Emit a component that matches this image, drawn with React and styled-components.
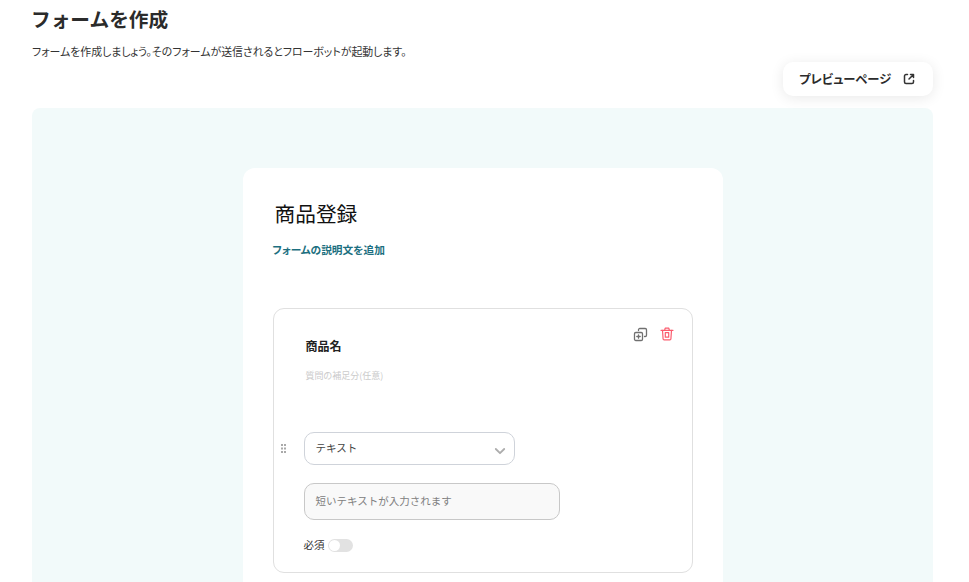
import React from "react";
import styled, { createGlobalStyle } from "styled-components";

const GlobalStyle = createGlobalStyle`
  html, body {
    margin: 0;
    padding: 0;
    height: 582px;
    overflow: hidden;
    background: #fff;
    font-family: "Noto Sans CJK JP", "Noto Sans", sans-serif;
    color: #222;
  }
  * { box-sizing: border-box; }
`;

const Page = styled.div`
  padding: 5px 36px 0 32px;
`;

const Title = styled.h1`
  margin: 0 0 0 -1px;
  font-size: 19.7px;
  line-height: 28px;
  font-weight: 700;
  color: #2b2b2b;
`;

const Lead = styled.p`
  margin: 10px 0 0;
  font-size: 10.9px;
  line-height: 16px;
  font-feature-settings: "palt";
  color: #333;
`;

const Actions = styled.div`
  display: flex;
  justify-content: flex-end;
  margin-top: 3px;
`;

const PreviewButton = styled.button`
  display: flex;
  align-items: center;
  gap: 12px;
  width: 150px;
  height: 34px;
  padding: 0 17px 1px 16px;
  border: 0;
  border-radius: 10px;
  background: #fff;
  box-shadow: 0 2px 14px rgba(0, 0, 0, 0.09);
  font-family: inherit;
  font-size: 12.3px;
  font-weight: 700;
  font-feature-settings: "palt";
  color: #2b2b2b;
  white-space: nowrap;
`;

const Canvas = styled.section`
  display: flex;
  justify-content: center;
  height: 480px;
  margin-top: 12px;
  padding-top: 60px;
  background: #f2fafa;
  border-radius: 8px 8px 0 0;
`;

const FormCard = styled.div`
  width: 480px;
  height: 420px;
  padding: 30px 30px 0;
  background: #fff;
  border-radius: 12px 12px 0 0;
`;

const FormTitle = styled.h2`
  margin: 0 0 0 2px;
  font-size: 20.7px;
  line-height: 30px;
  font-weight: 400;
  color: #111;
`;

const AddDescription = styled.a`
  display: block;
  margin-top: 14px;
  font-size: 10.7px;
  line-height: 16px;
  font-weight: 700;
  font-feature-settings: "palt";
  color: #1c6f80;
`;

const QuestionCard = styled.div`
  position: relative;
  width: 420px;
  height: 265px;
  margin-top: 50px;
  padding: 28px 31px 0;
  border: 1px solid #e0e0e0;
  border-radius: 11px;
`;

const Tools = styled.div`
  position: absolute;
  top: 18px;
  right: 18px;
  display: flex;
  gap: 12px;
`;

const QuestionName = styled.div`
  margin-left: 1px;
  font-size: 12px;
  line-height: 18px;
  font-weight: 700;
  color: #222;
`;

const QuestionHint = styled.div`
  margin: 14px 0 0 1px;
  font-size: 9px;
  line-height: 14px;
  font-feature-settings: "palt";
  color: #cbcbcb;
`;

const Handle = styled.svg`
  position: absolute;
  left: 7px;
  top: 135px;
`;

const TypeSelect = styled.div`
  display: flex;
  align-items: center;
  justify-content: space-between;
  width: 211px;
  height: 33px;
  margin: 49px 0 0 -1px;
  padding: 0 8px 2px 11px;
  border: 1px solid #cfd3da;
  border-radius: 10px;
  font-size: 10.5px;
  color: #444;
`;

const TextPreview = styled.div`
  display: flex;
  align-items: center;
  width: 256px;
  height: 37px;
  margin: 18px 0 0 -1px;
  padding: 0 0 2px 11px;
  border: 1px solid #c8c8c8;
  border-radius: 10px;
  background: #f9f9f9;
  font-size: 10.5px;
  color: #808080;
`;

const RequiredRow = styled.div`
  display: flex;
  align-items: center;
  gap: 3px;
  margin: 17px 0 0 -1px;
  font-size: 10.5px;
  line-height: 16px;
  color: #333;
`;

const Switch = styled.span`
  position: relative;
  width: 25px;
  height: 13px;
  border-radius: 7px;
  background: #e2e2e2;

  &::after {
    content: "";
    position: absolute;
    left: 1px;
    top: 1px;
    width: 11px;
    height: 11px;
    border-radius: 50%;
    background: #fff;
  }
`;

const ExternalIcon = () => (
  <svg width="12" height="12" viewBox="0 0 12 12" fill="none" stroke="#333" strokeWidth="1.5" strokeLinecap="round" strokeLinejoin="round">
    <path d="M4.500 1.500H3A1.500 1.500 0 0 0 1.500 3v6A1.500 1.500 0 0 0 3 10.500h6A1.500 1.500 0 0 0 10.500 9V7.500" />
    <path d="M7.500 1.500h3v3M10.300 1.700 6 6" />
  </svg>
);

const CopyIcon = () => (
  <svg width="15" height="15" viewBox="0 0 15 15" fill="none" stroke="#707070" strokeWidth="1.300" strokeLinejoin="round" strokeLinecap="round">
    <path d="M5.500 3.500V2.800A1.300 1.300 0 0 1 6.800 1.500h5.400a1.300 1.300 0 0 1 1.300 1.300v5.400a1.300 1.300 0 0 1-1.300 1.300h-.7" />
    <rect x="1.500" y="5.500" width="8" height="8" rx="1.300" />
    <path d="M5.500 7.800v3.400M3.800 9.500h3.400" />
  </svg>
);

const TrashIcon = () => (
  <svg width="14" height="14" viewBox="0 0 14 14" fill="none" stroke="#fb5c6e" strokeWidth="1.200" strokeLinejoin="round" strokeLinecap="round">
    <path d="M1 3.300h12" />
    <path d="M4.700 3.200 5.200 1.200h3.600l.5 2" />
    <path d="M2.500 3.300l.6 8.700a1 1 0 0 0 1 .9h5.800a1 1 0 0 0 1-.9l.6-8.700" />
    <rect x="5.300" y="5.600" width="3.400" height="4.600" />
  </svg>
);

const ChevronIcon = () => (
  <svg width="12" height="12" viewBox="0 0 12 12" fill="none" stroke="#adadad" strokeWidth="1.800" strokeLinecap="round" strokeLinejoin="round" style={{ marginTop: 6 }}>
    <path d="M1.800 4l4.200 4.200L10.200 4" />
  </svg>
);

export default function App() {
  return (
    <>
      <GlobalStyle />
      <Page>
        <Title>フォームを作成</Title>
        <Lead>フォームを作成しましょう。そのフォームが送信されるとフローボットが起動します。</Lead>
        <Actions>
          <PreviewButton>
            プレビューページ
            <ExternalIcon />
          </PreviewButton>
        </Actions>
        <Canvas>
          <FormCard>
            <FormTitle>商品登録</FormTitle>
            <AddDescription>フォームの説明文を追加</AddDescription>
            <QuestionCard>
              <Tools>
                <CopyIcon />
                <TrashIcon />
              </Tools>
              <Handle width="5" height="9" viewBox="0 0 5 9" fill="#aaa">
                <rect x="0" y="0" width="2" height="2" />
                <rect x="3" y="0" width="2" height="2" />
                <rect x="0" y="3.500" width="2" height="2" />
                <rect x="3" y="3.500" width="2" height="2" />
                <rect x="0" y="7" width="2" height="2" />
                <rect x="3" y="7" width="2" height="2" />
              </Handle>
              <QuestionName>商品名</QuestionName>
              <QuestionHint>質問の補足分(任意)</QuestionHint>
              <TypeSelect>
                テキスト
                <ChevronIcon />
              </TypeSelect>
              <TextPreview>短いテキストが入力されます</TextPreview>
              <RequiredRow>
                必須
                <Switch />
              </RequiredRow>
            </QuestionCard>
          </FormCard>
        </Canvas>
      </Page>
    </>
  );
}
